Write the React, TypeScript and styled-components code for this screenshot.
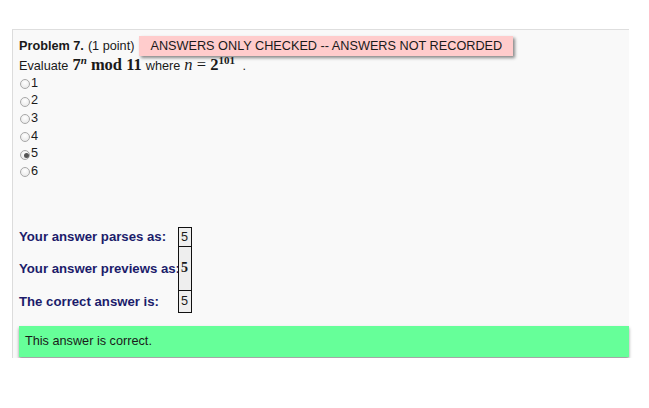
import React, { useState } from "react";
import styled, { createGlobalStyle } from "styled-components";

const GlobalStyle = createGlobalStyle`
  html, body {
    margin: 0;
    padding: 0;
    background: #ffffff;
  }
  body {
    font-family: "Liberation Sans", Arial, sans-serif;
    font-size: 12.7px;
    color: #1a1a1a;
  }
`;

const Page = styled.div`
  padding: 29px 0 0 12px;
`;

const Panel = styled.div`
  width: 610px;
  height: 323px;
  background: #f9f9f9;
  border-top: 1px solid #dedede;
  border-left: 1px solid #dcdcdc;
  padding: 5px 0 0 6px;
  display: flex;
  flex-direction: column;
`;

const HeaderRow = styled.div`
  display: flex;
  align-items: center;
  height: 21px;
`;

const Title = styled.b`
  font-weight: bold;
  margin-right: 4px;
`;

const Badge = styled.span`
  margin-left: 5px;
  height: 20px;
  line-height: 20px;
  padding: 0 11px;
  background: #ffcccc;
  box-shadow: 2px 2px 3px rgba(0, 0, 0, 0.45);
  white-space: nowrap;
`;

const Question = styled.div`
  height: 18px;
  line-height: 18px;
  white-space: nowrap;
`;

const Math = styled.span<{ bold?: boolean }>`
  font-family: "Liberation Serif", "DejaVu Serif", serif;
  font-size: 16.5px;
  font-weight: ${(p) => (p.bold ? "bold" : "normal")};
  margin: 0 4px;
`;

const Sup = styled.sup`
  font-size: 11px;
  line-height: 0;
`;

const Var = styled.i`
  font-style: italic;
`;

const Options = styled.div`
  display: flex;
  flex-direction: column;
`;

const Option = styled.label`
  display: flex;
  align-items: center;
  height: 17.6px;
  cursor: pointer;
`;

const Radio = styled.input`
  appearance: none;
  width: 10px;
  height: 10px;
  margin: 3px 1px 0 1px;
  border-radius: 50%;
  border: 1px solid #a8a8a8;
  background: radial-gradient(circle at 50% 35%, #ffffff 0%, #e4e4e4 100%);
  position: relative;

  &:checked::after {
    content: "";
    position: absolute;
    left: 2.5px;
    top: 2.5px;
    width: 5px;
    height: 5px;
    border-radius: 50%;
    background: #555555;
  }
`;

const Results = styled.div`
  margin-top: 47px;
  display: grid;
  grid-template-columns: 159px 14px;
  grid-template-rows: 20px 43px 23px;
`;

const Label = styled.div`
  display: flex;
  align-items: center;
  font-weight: bold;
  font-size: 13.2px;
  color: #1c1c6b;
  white-space: nowrap;
`;

const Cell = styled.div<{ math?: boolean }>`
  border: 1px solid #111111;
  border-top-width: ${(p) => (p.math ? "0" : "1px")};
  border-bottom-width: ${(p) => (p.math ? "0" : "1px")};
  background: #eeeeee;
  display: flex;
  align-items: center;
  padding-left: 2px;
  font-family: ${(p) => (p.math ? '"Liberation Serif", serif' : "inherit")};
  font-size: ${(p) => (p.math ? "14px" : "inherit")};
  font-weight: ${(p) => (p.math ? "bold" : "normal")};
`;

const Feedback = styled.div`
  margin-top: 13px;
  height: 31px;
  line-height: 31px;
  padding-left: 6px;
  background: #66ff99;
  box-shadow: 0 2px 3px rgba(0, 0, 0, 0.4);
`;

const choices = ["1", "2", "3", "4", "5", "6"];

export default function App() {
  const [picked, setPicked] = useState("5");

  return (
    <Page>
      <GlobalStyle />
      <Panel>
        <HeaderRow>
          <Title>Problem 7.</Title>
          <span>(1 point)</span>
          <Badge>ANSWERS ONLY CHECKED -- ANSWERS NOT RECORDED</Badge>
        </HeaderRow>
        <Question>
          Evaluate
          <Math bold>
            7<Sup><Var>n</Var></Sup> mod 11
          </Math>
          where
          <Math>
            <Var>n</Var> = <b>2<Sup>101</Sup></b>
          </Math>{" "}
          .
        </Question>
        <Options>
          {choices.map((c) => (
            <Option key={c}>
              <Radio
                type="radio"
                name="ans"
                checked={picked === c}
                onChange={() => setPicked(c)}
              />
              {c}
            </Option>
          ))}
        </Options>
        <Results>
          <Label>Your answer parses as:</Label>
          <Cell>5</Cell>
          <Label>Your answer previews as:</Label>
          <Cell math>5</Cell>
          <Label>The correct answer is:</Label>
          <Cell>5</Cell>
        </Results>
        <Feedback>This answer is correct.</Feedback>
      </Panel>
    </Page>
  );
}
